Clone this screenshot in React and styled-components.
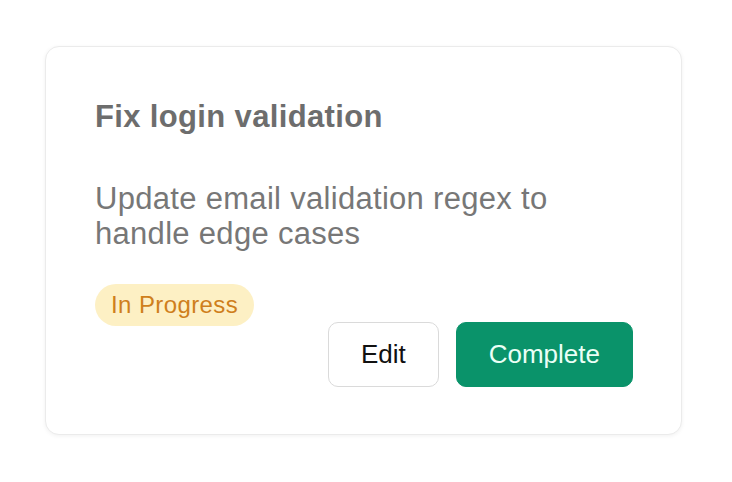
import React from 'react';
import styled, { createGlobalStyle } from 'styled-components';

const GlobalStyle = createGlobalStyle`
  html, body {
    margin: 0;
    padding: 0;
    background: #ffffff;
    font-family: 'Liberation Sans', Arial, sans-serif;
  }
`;

const task = {
  title: 'Fix login validation',
  description: 'Update email validation regex to handle edge cases',
  status: 'In Progress',
};

function App() {
  return (
    <>
      <GlobalStyle />
      <Page>
        <Card>
          <Title>{task.title}</Title>
          <Description>{task.description}</Description>
          <Footer>
            <Badge>{task.status}</Badge>
            <Actions>
              <Button>Edit</Button>
              <Button primary>Complete</Button>
            </Actions>
          </Footer>
        </Card>
      </Page>
    </>
  );
}

// ========== Styled Components ==========

const Page = styled.div`
  padding: 46px 50px 46px 45px;
`;

const Card = styled.div`
  background: #fff;
  border: 1px solid #ebebeb;
  border-radius: 14px;
  box-shadow: 0 1px 4px rgba(0, 0, 0, 0.06);
  padding: 52px 48px 47px 49px;
`;

const Title = styled.h3`
  margin: 0;
  font-size: 31px;
  line-height: 36px;
  font-weight: 700;
  letter-spacing: 0.35px;
  color: #6d6d6d;
`;

const Description = styled.p`
  margin: 46px 0 0;
  font-size: 31px;
  line-height: 35px;
  letter-spacing: 0.3px;
  color: #777777;
  max-width: 480px;
`;

const Footer = styled.div`
  margin-top: 33px;
  display: flex;
  justify-content: space-between;
  align-items: flex-start;
`;

const Badge = styled.span`
  display: inline-block;
  padding: 7px 16px;
  font-size: 24px;
  line-height: 28px;
  letter-spacing: 0.4px;
  color: #cf7f1c;
  background: #fdf0c4;
  border-radius: 999px;
`;

const Actions = styled.div`
  margin-top: 38px;
  display: flex;
  gap: 17px;
`;

const Button = styled.button`
  height: 65px;
  padding: 0 32px;
  font-family: 'Liberation Sans', Arial, sans-serif;
  font-size: 26px;
  border-radius: 10px;
  cursor: pointer;
  border: 1px solid ${(p) => (p.primary ? '#0a936a' : '#dadada')};
  background: ${(p) => (p.primary ? '#0a936a' : '#ffffff')};
  color: ${(p) => (p.primary ? '#eafff6' : '#111111')};
`;

export default App;
